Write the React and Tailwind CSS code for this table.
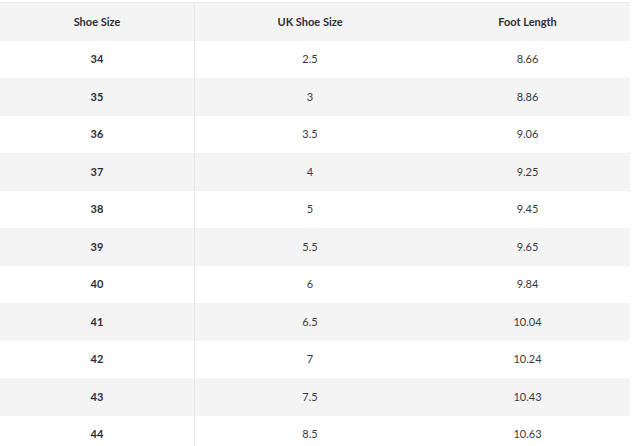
import React from "react";

const rows = [
  ["34", "2.5", "8.66"],
  ["35", "3", "8.86"],
  ["36", "3.5", "9.06"],
  ["37", "4", "9.25"],
  ["38", "5", "9.45"],
  ["39", "5.5", "9.65"],
  ["40", "6", "9.84"],
  ["41", "6.5", "10.04"],
  ["42", "7", "10.24"],
  ["43", "7.5", "10.43"],
  ["44", "8.5", "10.63"],
];

export default function App() {
  return (
    <div className="w-[632px] h-[446px] overflow-hidden bg-white pt-[2px]" style={{ fontFamily: "Lato, 'Noto Sans', sans-serif" }}>
      <div className="w-[630px] border-t border-[#ebebeb]">
        <div className="flex h-[38px] bg-[#f4f4f4] text-[11px] font-bold text-[#2d2d35]">
          <div className="w-[195px] flex items-center justify-center border-r border-[#e6e6e6]">Shoe Size</div>
          <div className="w-[230px] flex items-center justify-center">UK Shoe Size</div>
          <div className="flex-1 flex items-center justify-center">Foot Length</div>
        </div>
        {rows.map((r, i) => (
          <div
            key={r[0]}
            className={
              i % 2 === 0
                ? "flex h-[37px] bg-white text-[11px] text-[#3a3a40]"
                : "flex h-[38px] bg-[#f4f4f4] text-[11px] text-[#3a3a40]"
            }
          >
            <div className="w-[195px] flex items-center justify-center border-r border-[#e6e6e6] font-bold text-[#2d2d35]">{r[0]}</div>
            <div className="w-[230px] flex items-center justify-center">{r[1]}</div>
            <div className="flex-1 flex items-center justify-center">{r[2]}</div>
          </div>
        ))}
      </div>
    </div>
  );
}
